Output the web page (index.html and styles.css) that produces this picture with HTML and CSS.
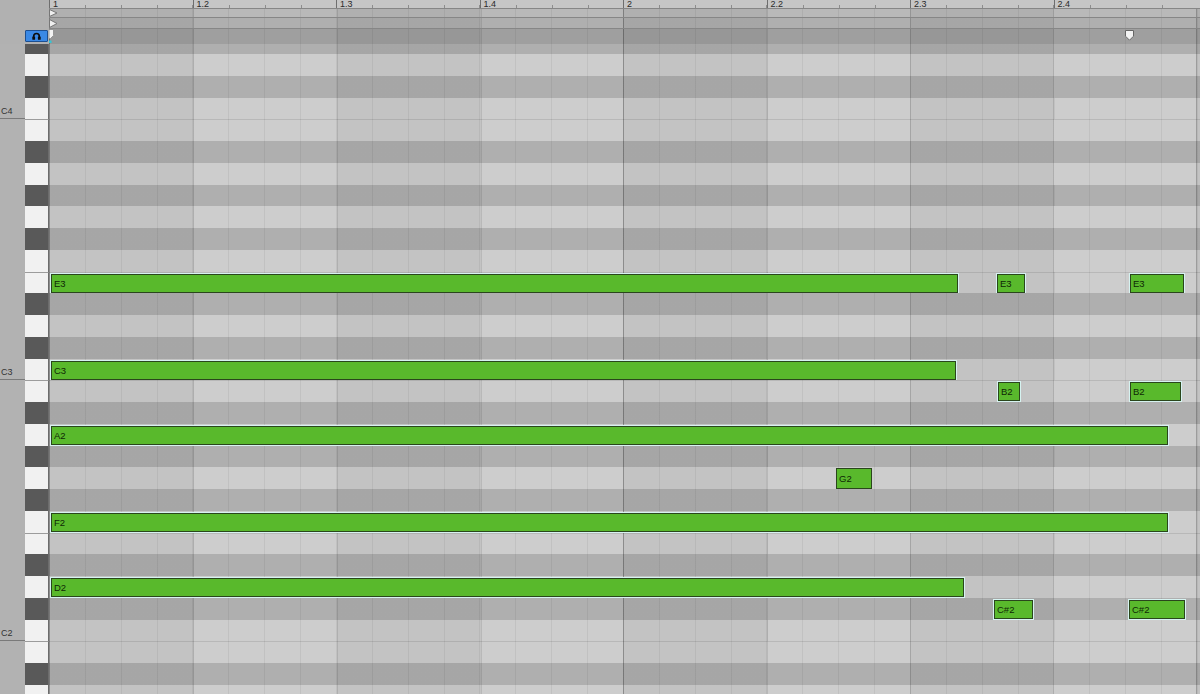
FILE: index.html
```html
<!DOCTYPE html>
<html lang="en">
<head>
  <meta charset="UTF-8" />
  <title>MIDI Clip Editor</title>
  <link rel="stylesheet" href="styles.css">
</head>
<body>
  <div class="editor">
    <header class="head">
      <div class="head-side">
        <div class="side-gap"></div>
        <div class="side-tools">
          <button class="solo" title="Preview">
            <svg width="9" height="8" viewBox="0 0 9 8">
              <path d="M1.7 6 V4.3 A2.8 2.8 0 0 1 7.3 4.3 V6" fill="none" stroke="#0d0d0d" stroke-width="1.6"/>
              <rect x="0.3" y="4.4" width="2.8" height="3.4" rx="0.6" fill="#0d0d0d"/>
              <rect x="5.9" y="4.4" width="2.8" height="3.4" rx="0.6" fill="#0d0d0d"/>
            </svg>
          </button>
        </div>
      </div>

      <div class="head-main">
        <div class="ruler">
          <span class="beat">1</span>
          <span class="beat">1.2</span>
          <span class="beat">1.3</span>
          <span class="beat">1.4</span>
          <span class="beat">2</span>
          <span class="beat">2.2</span>
          <span class="beat">2.3</span>
          <span class="beat">2.4</span>
        </div>
        <div class="strip strip-a gridlines">
          <svg class="tri" width="9" height="8" viewBox="0 0 9 8"><polygon points="0.5,0.5 8,4 0.5,7.5" fill="#efefef" stroke="#767676"/></svg>
        </div>
        <div class="strip strip-b gridlines">
          <svg class="tri" width="9" height="9" viewBox="0 0 9 9"><polygon points="0.5,0.5 8,4.5 0.5,8.5" fill="#efefef" stroke="#767676"/></svg>
        </div>
        <div class="strip strip-loop gridlines">
          <svg class="start-flag" width="6" height="15" viewBox="0 0 6 15">
            <polygon points="0,0.5 4.5,0.5 4.5,6.5 1.5,9.5 0,9.5" fill="#f3f3f3" stroke="#8a8a8a" stroke-width="0.8"/>
            <rect x="0" y="11.5" width="2.5" height="2.5" fill="#33c6d6"/>
          </svg>
          <svg class="end-flag" width="9" height="11" viewBox="0 0 9 11">
            <polygon points="0.5,0.5 8.5,0.5 8.5,6.2 4.5,10.2 0.5,6.2" fill="#f2f2f2" stroke="#666"/>
          </svg>
        </div>
      </div>
    </header>

    <section class="roll">
      <div class="rows" id="rows">
        <!-- one row per semitone, filled in below -->
      </div>
    </section>
  </div>

  <script>
    const NAMES = ['C', 'C#', 'D', 'D#', 'E', 'F', 'F#', 'G', 'G#', 'A', 'A#', 'B'];
    const LANE_X = 49;

    // pitch, left edge, right edge (screen px), selected
    const NOTES = [
      ['E3', 50, 959, true], ['E3', 996, 1026, true], ['E3', 1129, 1185, true],
      ['C3', 50, 957, true],
      ['B2', 997, 1021, true], ['B2', 1129, 1182, true],
      ['A2', 50, 1169, true],
      ['G2', 836, 872, false],
      ['F2', 50, 1169, true],
      ['D2', 50, 965, true],
      ['C#2', 993, 1034, true], ['C#2', 1128, 1186, true]
    ];

    const rows = document.getElementById('rows');

    // D#4 down to A1
    for (let p = 51; p > 20; p--) {
      const step = NAMES[p % 12];
      const name = step + Math.floor(p / 12);

      const row = document.createElement('div');
      row.className = 'row';
      if (step.includes('#')) row.classList.add('black');
      if (step === 'C') row.classList.add('octave');
      if (step === 'B' || step === 'E') row.classList.add('edge');

      const label = document.createElement('div');
      label.className = 'name';
      if (step === 'C') label.textContent = name;

      const key = document.createElement('div');
      key.className = 'key';

      const lane = document.createElement('div');
      lane.className = 'lane gridlines';

      NOTES.filter(n => n[0] === name).forEach(n => {
        const note = document.createElement('div');
        note.className = n[3] ? 'note selected' : 'note';
        const pad = n[3] ? 1 : 0;
        note.style.left = (n[1] + pad - LANE_X) + 'px';
        note.style.width = (n[2] - n[1] - pad * 2) + 'px';
        note.textContent = n[0];
        lane.appendChild(note);
      });

      row.appendChild(label);
      row.appendChild(key);
      row.appendChild(lane);
      rows.appendChild(row);
    }
  </script>
</body>
</html>
```

FILE: styles.css
```css
* {
  margin: 0;
  padding: 0;
  box-sizing: border-box;
}

body {
  width: 1200px;
  height: 694px;
  overflow: hidden;
  background-color: #b2b2b2;
  color: #2e2e2e;
  font-family: "Liberation Sans", Arial, sans-serif;
}

.editor {
  display: flex;
  flex-direction: column;
  height: 694px;
}

/* ---------- header ---------- */

.head {
  display: flex;
  height: 44px;
  flex: none;
}

.head-side {
  width: 49px;
  display: flex;
  flex-direction: column;
  background-color: #b1b1b1;
}

.side-gap {
  height: 29px;
}

.side-tools {
  flex: 1;
  padding: 1px 0 0 25px;
}

.solo {
  display: flex;
  align-items: center;
  justify-content: center;
  width: 23px;
  height: 12px;
  background-color: #3a89e6;
  border: 1px solid #1d4f90;
  border-radius: 1px;
}

.head-main {
  flex: 1;
  display: flex;
  flex-direction: column;
}

.ruler {
  display: flex;
  height: 8px;
  background-color: #c6c6c6;
}

.beat {
  flex: none;
  width: 143.5px;
  height: 8px;
  padding-left: 3px;
  border-left: 1px solid #6e6e6e;
  font-size: 9px;
  line-height: 8px;
  color: #2a2a2a;
  background-image: repeating-linear-gradient(to right, transparent 0 34.875px, #8d8d8d 34.875px 35.875px);
  background-size: 100% 3px;
  background-position: left bottom;
  background-repeat: no-repeat;
}

.strip {
  position: relative;
  border-top: 1px solid #868686;
}

.strip-a {
  height: 9px;
  background-color: #b9b9b9;
}

.strip-b {
  height: 11px;
  background-color: #afafaf;
}

.strip-loop {
  height: 16px;
  background-color: #9f9f9f;
}

.tri {
  display: block;
}

.strip-b .tri {
  margin-top: 1px;
}

.start-flag {
  position: absolute;
  left: 0;
  top: 0;
}

.end-flag {
  position: absolute;
  left: 1076px;
  top: 1px;
}

/* bar / beat / sixteenth lines and beat shading, shared by the strips and the note lanes */
.gridlines {
  background-image:
    linear-gradient(to right,
      rgba(0, 0, 0, 0.24) 0 1px, transparent 1px 144px,
      rgba(0, 0, 0, 0.1) 144px 145px, transparent 145px 288px,
      rgba(0, 0, 0, 0.1) 288px 289px, transparent 289px 432px,
      rgba(0, 0, 0, 0.1) 432px 433px, transparent 433px 574px,
      rgba(0, 0, 0, 0.24) 574px 575px, transparent 575px 718px,
      rgba(0, 0, 0, 0.1) 718px 719px, transparent 719px 861px,
      rgba(0, 0, 0, 0.1) 861px 862px, transparent 862px 1004px,
      rgba(0, 0, 0, 0.1) 1004px 1005px, transparent 1005px 1147px,
      rgba(0, 0, 0, 0.24) 1147px 1148px, transparent 1148px),
    repeating-linear-gradient(to right, rgba(0, 0, 0, 0.06) 0 1px, transparent 1px 35.875px),
    linear-gradient(to right,
      rgba(0, 0, 0, 0.05) 0 144px, transparent 144px 288px,
      rgba(0, 0, 0, 0.05) 288px 432px, transparent 432px 574px,
      rgba(0, 0, 0, 0.05) 574px 718px, transparent 718px 861px,
      rgba(0, 0, 0, 0.05) 861px 1004px, transparent 1004px 1148px,
      rgba(0, 0, 0, 0.05) 1148px);
}

/* ---------- piano roll ---------- */

.roll {
  flex: 1;
  overflow: hidden;
}

.rows {
  margin-top: -11.75px;
}

.row {
  display: grid;
  grid-template-columns: 25px 24px 1fr;
  height: 21.75px;
}

.name {
  display: flex;
  align-items: flex-end;
  padding: 0 0 2px 1px;
  font-size: 9px;
  line-height: 9px;
  color: #333;
}

.row.octave .name {
  border-bottom: 1px solid #7a7a7a;
}

.key {
  background-color: #f1f1f1;
  border-right: 1px solid #6c6c6c;
}

.row.black .key {
  background-color: #595959;
}

.row.edge .key {
  border-top: 1px solid #9c9c9c;
}

.lane {
  position: relative;
  background-color: #cdcdcd;
}

.row.black .lane {
  background-color: #afafaf;
}

.row.edge .lane::before {
  content: "";
  position: absolute;
  left: 0;
  right: 0;
  top: 0;
  height: 1px;
  background-color: rgba(0, 0, 0, 0.1);
}

.note {
  position: absolute;
  top: 0.5px;
  height: 21px;
  padding: 5px 0 0 2px;
  background-color: #59b92c;
  border: 1px solid #2a461c;
  font-size: 9.5px;
  line-height: 9px;
  color: #0f2705;
  white-space: nowrap;
  overflow: hidden;
}

.note.selected {
  top: 2px;
  height: 19px;
  padding-top: 4px;
  box-shadow: 0 0 0 1px #d6f3f1;
}
```
